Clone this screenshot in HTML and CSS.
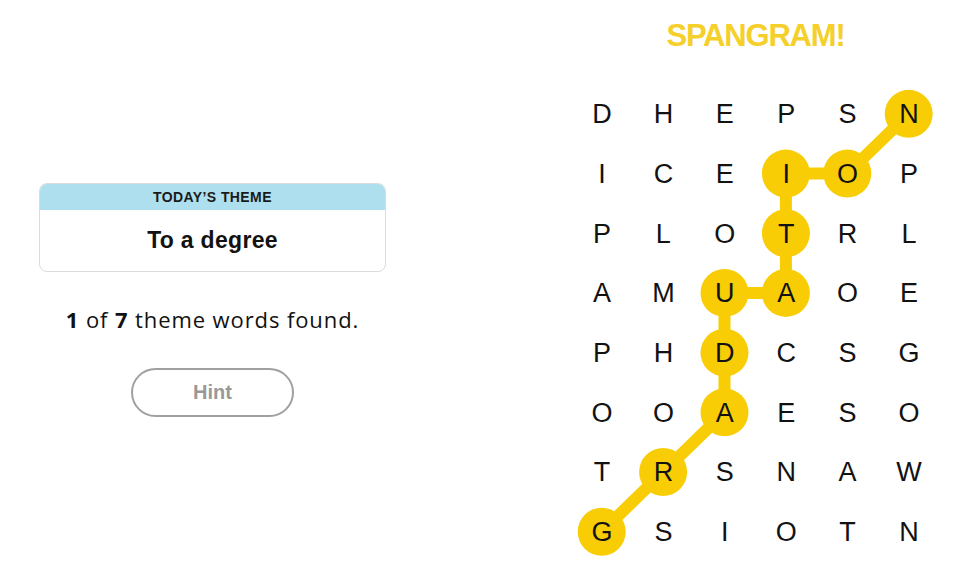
FILE: index.html
```html
<!DOCTYPE html>
<html lang="en">
<head>
    <meta charset="UTF-8">
    <title>Strands</title>
    <link rel="stylesheet" href="styles.css">
</head>
<body>
    <div class="game">
        <div class="panel">
            <div class="theme-card">
                <div class="theme-label">TODAY’S THEME</div>
                <div class="theme-text">To a degree</div>
            </div>
            <p class="found"><b>1</b> of <b>7</b> theme words found.</p>
            <button class="hint">Hint</button>
        </div>

        <div class="board">
            <h2 class="word-label">SPANGRAM!</h2>
            <div class="grid-wrap">
                <!-- path of the spangram, drawn under the letters -->
                <svg class="path" viewBox="0 0 368.4 477.6" width="368.4" height="477.6">
                    <polyline points="30.7,447.75 92.1,388.05 153.5,328.35 153.5,268.65 153.5,208.95 214.9,208.95 214.9,149.25 214.9,89.55 276.3,89.55 337.7,29.85"
                        fill="none" stroke="#f8cd05" stroke-width="12" stroke-linejoin="round" stroke-linecap="round"/>
                    <g fill="#f8cd05">
                        <circle cx="30.7" cy="447.75" r="24"/>
                        <circle cx="92.1" cy="388.05" r="24"/>
                        <circle cx="153.5" cy="328.35" r="24"/>
                        <circle cx="153.5" cy="268.65" r="24"/>
                        <circle cx="153.5" cy="208.95" r="24"/>
                        <circle cx="214.9" cy="208.95" r="24"/>
                        <circle cx="214.9" cy="149.25" r="24"/>
                        <circle cx="214.9" cy="89.55" r="24"/>
                        <circle cx="276.3" cy="89.55" r="24"/>
                        <circle cx="337.7" cy="29.85" r="24"/>
                    </g>
                </svg>
                <div class="grid" id="grid"></div>
            </div>
        </div>
    </div>

    <script>
        const rows = [
            "DHEPSN",
            "ICEIOP",
            "PLOTRL",
            "AMUAOE",
            "PHDCSG",
            "OOAESO",
            "TRSNAW",
            "GSIOTN"
        ];

        const grid = document.getElementById('grid');
        rows.forEach(function (row) {
            for (const letra of row) {
                const cell = document.createElement('div');
                cell.className = 'cell';
                cell.textContent = letra;
                grid.appendChild(cell);
            }
        });
    </script>
</body>
</html>
```

FILE: styles.css
```css
body {
    margin: 0;
    background-color: #fff;
    font-family: 'Liberation Sans', Arial, sans-serif;
    color: #121212;
}

.game {
    display: flex;
}

.panel {
    width: 425px;
    padding-top: 183px;
    display: flex;
    flex-direction: column;
    align-items: center;
}

.theme-card {
    width: 345px;
    border: 1px solid #dcdcdc;
    border-radius: 8px;
    overflow: hidden;
    text-align: center;
}

.theme-label {
    background-color: #aedfee;
    height: 26px;
    line-height: 27px;
    font-size: 14px;
    font-weight: bold;
    letter-spacing: 0.4px;
    color: #1a1a1a;
}

.theme-text {
    height: 61px;
    line-height: 60px;
    font-size: 23px;
    font-weight: bold;
    letter-spacing: 0.3px;
    color: #121212;
}

.found {
    margin: 34px 0 0 0;
    font-family: 'Open Sans', 'Liberation Sans', sans-serif;
    font-size: 22px;
    line-height: 26px;
    letter-spacing: 0.9px;
    color: #121212;
}

.hint {
    margin-top: 36px;
    width: 163px;
    height: 49px;
    border: 2px solid #a0a0a0;
    border-radius: 25px;
    background-color: #fff;
    color: #999;
    font-family: 'Liberation Sans', Arial, sans-serif;
    font-size: 20px;
    font-weight: bold;
    cursor: pointer;
}

.board {
    margin-left: 146px;
    width: 369px;
    display: flex;
    flex-direction: column;
    align-items: center;
}

.word-label {
    margin: 19px 0 0 0;
    height: 65px;
    font-size: 31px;
    line-height: 34px;
    font-weight: bold;
    letter-spacing: -1.2px;
    color: #f5cf2a;
}

.grid-wrap {
    position: relative;
    width: 368.4px;
    height: 477.6px;
}

.path {
    position: absolute;
    left: 0;
    top: 0;
}

.grid {
    position: relative;
    display: grid;
    grid-template-columns: repeat(6, 61.4px);
    grid-template-rows: repeat(8, 59.7px);
}

.cell {
    display: flex;
    align-items: center;
    justify-content: center;
    padding-top: 2px;
    font-size: 27px;
    color: #121212;
}
```
